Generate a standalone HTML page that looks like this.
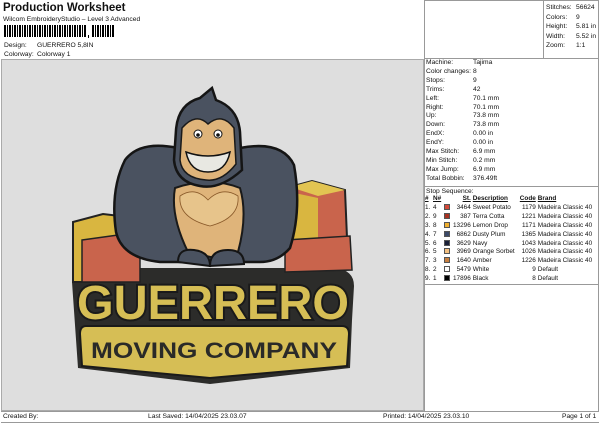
<!DOCTYPE html>
<html><head><meta charset="utf-8"><style>
*{margin:0;padding:0;box-sizing:border-box}
body{width:600px;height:424px;background:#fff;font-family:"Liberation Sans",Arial,sans-serif;font-size:6.7px;color:#111;position:relative;overflow:hidden}
.a{position:absolute;white-space:nowrap;line-height:9px}
.bx{position:absolute;border:1px solid #999}
table{border-collapse:collapse}
td{padding:0;height:8.9px;line-height:8.9px;font-size:6.4px;white-space:nowrap}
.sw{display:inline-block;width:6px;height:6px;border:1px solid #555;vertical-align:-1px}
</style></head><body>
<div class="a" style="left:3px;top:2px;font-size:11.5px;font-weight:bold;line-height:13px">Production Worksheet</div>
<div class="a" style="left:3px;top:15px;font-size:6.7px">Wilcom EmbroideryStudio – Level 3 Advanced</div>
<svg class="a" style="left:4px;top:25px" width="115" height="14">
<g fill="#000">
<rect x="0" y="0" width="2" height="12"/><rect x="3" y="0" width="1" height="12"/><rect x="5" y="0" width="2" height="12"/><rect x="8" y="0" width="1" height="12"/><rect x="10" y="0" width="2" height="12"/><rect x="13" y="0" width="1" height="12"/><rect x="15" y="0" width="2" height="12"/><rect x="18" y="0" width="1" height="12"/><rect x="20" y="0" width="2" height="12"/><rect x="23" y="0" width="1" height="12"/><rect x="25" y="0" width="2" height="12"/><rect x="28" y="0" width="1" height="12"/><rect x="30" y="0" width="2" height="12"/><rect x="33" y="0" width="1" height="12"/><rect x="35" y="0" width="2" height="12"/><rect x="38" y="0" width="1" height="12"/><rect x="40" y="0" width="2" height="12"/><rect x="43" y="0" width="1" height="12"/><rect x="45" y="0" width="2" height="12"/><rect x="48" y="0" width="1" height="12"/><rect x="50" y="0" width="2" height="12"/><rect x="53" y="0" width="1" height="12"/><rect x="55" y="0" width="2" height="12"/><rect x="58" y="0" width="1" height="12"/><rect x="60" y="0" width="2" height="12"/><rect x="63" y="0" width="1" height="12"/><rect x="65" y="0" width="2" height="12"/><rect x="68" y="0" width="1" height="12"/><rect x="70" y="0" width="2" height="12"/><rect x="73" y="0" width="1" height="12"/><rect x="75" y="0" width="2" height="12"/><rect x="78" y="0" width="1" height="12"/><rect x="80" y="0" width="2" height="12"/><rect x="84" y="10" width="1" height="3"/>
<rect x="88" y="0" width="2" height="12"/><rect x="91" y="0" width="1" height="12"/><rect x="93" y="0" width="2" height="12"/><rect x="96" y="0" width="1" height="12"/><rect x="98" y="0" width="2" height="12"/><rect x="101" y="0" width="1" height="12"/><rect x="103" y="0" width="2" height="12"/><rect x="106" y="0" width="1" height="12"/><rect x="108" y="0" width="2" height="12"/></g></svg>
<div class="a" style="left:4px;top:41px">Design:</div><div class="a" style="left:37px;top:41px">GUERRERO 5,8IN</div>
<div class="a" style="left:4px;top:50px">Colorway:</div><div class="a" style="left:37px;top:50px">Colorway 1</div>

<div class="bx" style="left:1px;top:59px;width:423px;height:352px;background:#dedede;border-color:#aaa"></div>

<svg class="a" style="left:0;top:0" width="424" height="410" viewBox="0 0 424 410">
<path d="M72 282 Q72 270 90 268 L335 268 Q354 270 354 286 L352 320 L350 368 L210 384 L78 368 Z" fill="#2c2c2a"/>
<path d="M73 222 L103 214 L120 216 L120 282 L73 282 Z" fill="#d9b640" stroke="#222" stroke-width="2"/>
<path d="M82 240 L140 232 L140 282 L82 282Z" fill="#c9644c" stroke="#222" stroke-width="1.5"/>
<path d="M290 187 L312 181 L345 190 L348 262 L290 262Z" fill="#c9644c" stroke="#222" stroke-width="2"/>
<path d="M290 187 L312 181 L345 190 L318 196Z" fill="#e2c452"/>
<path d="M290 192 L318 198 L318 262 L290 262Z" fill="#d9b640"/>
<path d="M285 240 L350 236 L352 270 L285 272Z" fill="#c9644c" stroke="#222" stroke-width="1.5"/>
<path d="M125 160 Q140 140 178 148 L240 148 Q282 140 294 165 Q302 210 290 248 Q278 262 260 262 L160 262 Q122 258 116 232 Q110 190 125 160Z" fill="#4a5260" stroke="#151515" stroke-width="2.5"/>
<path d="M175 188 Q210 176 240 188 Q248 215 238 252 L215 258 L188 252 Q170 215 175 188Z" fill="#dfb47a" stroke="#1a1a1a" stroke-width="2"/>
<path d="M180 196 Q195 186 208 200 Q222 186 238 196 Q240 218 210 226 Q178 218 180 196Z" fill="#e7c48b" stroke="#8a5a2a" stroke-width="0.8"/>
<path d="M178 262 Q178 248 194 250 Q210 252 210 266 Z" fill="#4a5260" stroke="#151515" stroke-width="2"/>
<path d="M210 266 Q210 250 228 250 Q244 250 244 264 Z" fill="#4a5260" stroke="#151515" stroke-width="2"/>
<path d="M176 130 Q178 104 200 98 L212 88 L216 100 Q238 108 240 132 L242 170 Q220 190 200 186 Q176 182 174 160Z" fill="#4a5260" stroke="#151515" stroke-width="2.5"/>
<path d="M182 128 Q196 112 208 124 Q222 112 234 128 L236 164 Q222 182 206 180 Q182 178 180 160Z" fill="#dfb47a" stroke="#1a1a1a" stroke-width="1.5"/>
<circle cx="198" cy="134" r="4" fill="#fff" stroke="#111"/><circle cx="218" cy="134" r="4" fill="#fff" stroke="#111"/>
<circle cx="198" cy="135" r="1.8" fill="#111"/><circle cx="218" cy="135" r="1.8" fill="#111"/>
<path d="M186 152 Q208 160 230 152 Q226 172 208 172 Q190 172 186 152Z" fill="#e8e8e2" stroke="#111" stroke-width="1.5"/>
<text x="213" y="319" text-anchor="middle" font-family="Liberation Sans,Arial" font-weight="bold" font-size="48" fill="#d6be55" stroke="#1a1a1a" stroke-width="4" paint-order="stroke" textLength="272" lengthAdjust="spacingAndGlyphs">GUERRERO</text>
<path d="M86 326 L342 326 Q349 326 349 334 L347 366 L210 378 L82 366 L80 334 Q80 326 86 326Z" fill="#d6be55" stroke="#1a1a1a" stroke-width="2"/>
<text x="214" y="358" text-anchor="middle" font-family="Liberation Sans,Arial" font-weight="bold" font-size="22" fill="#2a2a28" textLength="246" lengthAdjust="spacingAndGlyphs">MOVING COMPANY</text>
</svg>

<div class="bx" style="left:424px;top:0;width:175px;height:59px"></div>
<div class="a" style="left:543px;top:0;width:1px;height:59px;background:#999"></div>
<div class="a" style="left:546px;top:3px">Stitches:</div><div class="a" style="left:576px;top:3px">56624</div>
<div class="a" style="left:546px;top:12.5px">Colors:</div><div class="a" style="left:576px;top:12.5px">9</div>
<div class="a" style="left:546px;top:22px">Height:</div><div class="a" style="left:576px;top:22px">5.81 in</div>
<div class="a" style="left:546px;top:31.5px">Width:</div><div class="a" style="left:576px;top:31.5px">5.52 in</div>
<div class="a" style="left:546px;top:41px">Zoom:</div><div class="a" style="left:576px;top:41px">1:1</div>

<div class="bx" style="left:424px;top:58px;width:175px;height:354px"></div>
<div class="a" style="left:425px;top:186px;width:173px;height:1px;background:#999"></div>
<div class="a" style="left:425px;top:284px;width:173px;height:1px;background:#999"></div>
<div class="a" style="left:426px;top:59px;line-height:8.9px">Machine:<br>Color changes:<br>Stops:<br>Trims:<br>Left:<br>Right:<br>Up:<br>Down:<br>EndX:<br>EndY:<br>Max Stitch:<br>Min Stitch:<br>Max Jump:<br>Total Bobbin:</div>
<div class="a" style="left:473px;top:59px;line-height:8.9px">Tajima<br>8<br>9<br>42<br>70.1 mm<br>70.1 mm<br>73.8 mm<br>73.8 mm<br>0.00 in<br>0.00 in<br>6.9 mm<br>0.2 mm<br>6.9 mm<br>376.49ft</div>
<div class="a" style="left:426px;top:186.5px">Stop Sequence:</div>
<table class="a" style="left:425px;top:195px">
<tr style="font-weight:bold;text-decoration:underline"><td style="width:8px">#</td><td style="width:11px">N#</td><td style="width:9px"></td><td style="width:17px;text-align:right">St.</td><td style="width:46px;padding-left:2px">Description</td><td style="width:19px;text-align:right">Code</td><td style="padding-left:2px">Brand</td></tr>
<tr><td>1.</td><td>4</td><td><span class="sw" style="background:#d44a3a"></span></td><td style="text-align:right">3464</td><td style="padding-left:2px">Sweet Potato</td><td style="text-align:right">1179</td><td style="padding-left:2px">Madeira Classic 40</td></tr>
<tr><td>2.</td><td>9</td><td><span class="sw" style="background:#a83322"></span></td><td style="text-align:right">387</td><td style="padding-left:2px">Terra Cotta</td><td style="text-align:right">1221</td><td style="padding-left:2px">Madeira Classic 40</td></tr>
<tr><td>3.</td><td>8</td><td><span class="sw" style="background:#f0b030"></span></td><td style="text-align:right">13296</td><td style="padding-left:2px">Lemon Drop</td><td style="text-align:right">1171</td><td style="padding-left:2px">Madeira Classic 40</td></tr>
<tr><td>4.</td><td>7</td><td><span class="sw" style="background:#3c4a68"></span></td><td style="text-align:right">6862</td><td style="padding-left:2px">Dusty Plum</td><td style="text-align:right">1365</td><td style="padding-left:2px">Madeira Classic 40</td></tr>
<tr><td>5.</td><td>6</td><td><span class="sw" style="background:#1a2038"></span></td><td style="text-align:right">3629</td><td style="padding-left:2px">Navy</td><td style="text-align:right">1043</td><td style="padding-left:2px">Madeira Classic 40</td></tr>
<tr><td>6.</td><td>5</td><td><span class="sw" style="background:#f4c080"></span></td><td style="text-align:right">3969</td><td style="padding-left:2px">Orange Sorbet</td><td style="text-align:right">1026</td><td style="padding-left:2px">Madeira Classic 40</td></tr>
<tr><td>7.</td><td>3</td><td><span class="sw" style="background:#c88040"></span></td><td style="text-align:right">1640</td><td style="padding-left:2px">Amber</td><td style="text-align:right">1226</td><td style="padding-left:2px">Madeira Classic 40</td></tr>
<tr><td>8.</td><td>2</td><td><span class="sw" style="background:#fff"></span></td><td style="text-align:right">5479</td><td style="padding-left:2px">White</td><td style="text-align:right">9</td><td style="padding-left:2px">Default</td></tr>
<tr><td>9.</td><td>1</td><td><span class="sw" style="background:#000"></span></td><td style="text-align:right">17896</td><td style="padding-left:2px">Black</td><td style="text-align:right">8</td><td style="padding-left:2px">Default</td></tr>
</table>

<div class="a" style="left:1px;top:411px;width:598px;height:1px;background:#999"></div>
<div class="a" style="left:1px;top:422px;width:598px;height:1px;background:#999"></div>
<div class="a" style="left:3px;top:412px">Created By:</div>
<div class="a" style="left:148px;top:412px">Last Saved: 14/04/2025 23.03.07</div>
<div class="a" style="left:383px;top:412px">Printed: 14/04/2025 23.03.10</div>
<div class="a" style="left:562px;top:412px">Page 1 of 1</div>
</body></html>
